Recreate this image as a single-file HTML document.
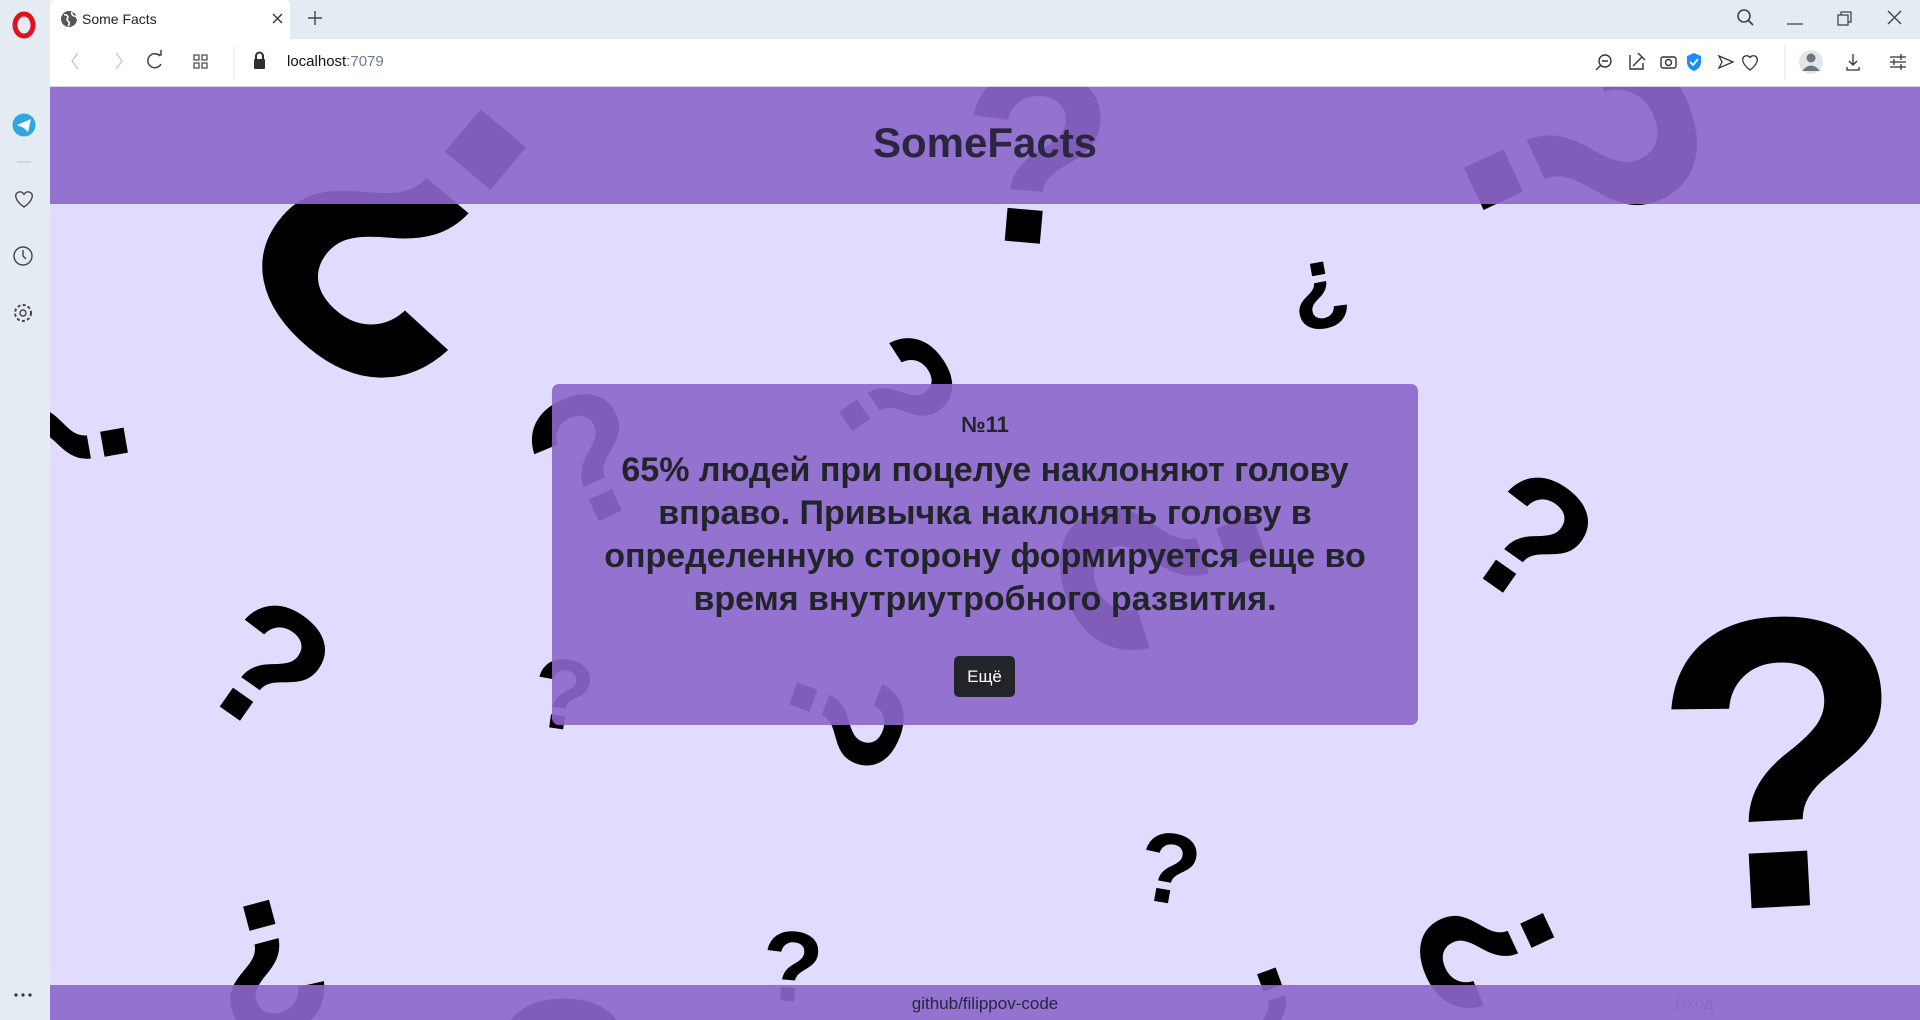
<!DOCTYPE html>
<html><head><meta charset="utf-8"><style>
*{margin:0;padding:0;box-sizing:border-box}
html,body{width:1920px;height:1020px;overflow:hidden}
body{background:#e4ebf3;font-family:"Liberation Sans","DejaVu Sans",sans-serif;position:relative}
.side{position:absolute;left:0;top:0;width:50px;height:1020px;background:#e4ebf3}
.tabbar{position:absolute;left:50px;top:0;right:0;height:39px;background:#e4ebf3}
.tab{position:absolute;left:0;top:0;width:240px;height:40px;background:#fff;border-radius:4px 4px 0 0}
.addr{position:absolute;left:50px;top:39px;right:0;height:48px;background:#fff;border-bottom:1px solid #cfd6df}
.page{position:absolute;left:50px;top:87px;width:1870px;height:933px;background:#e1dcfd;overflow:hidden}
.q{position:absolute;font-family:"Liberation Sans",sans-serif;font-weight:bold;color:#000;line-height:1;transform-origin:center;white-space:nowrap}
.ov{position:absolute;background:rgba(140,103,203,0.905)}
.hdr{left:0;top:0;right:0;height:117px}
.ftr{left:0;top:898px;right:0;height:40px}
.card{left:502px;top:297px;width:866px;height:341px;border-radius:7px}
.txt{position:absolute;color:#212529;text-align:center}
</style></head><body>
<div class="side">
 <svg width="50" height="1020" style="position:absolute;left:0;top:0">
  <ellipse cx="24" cy="25" rx="9" ry="11" fill="none" stroke="#e0121e" stroke-width="5"/>
  <circle cx="24" cy="125" r="11.5" fill="#2ea6de"/>
  <path d="M17 125 L31 119 L28 132 L24 128 Z" fill="#fff"/>
  <line x1="17" y1="162" x2="31" y2="162" stroke="#b8c2cc" stroke-width="1"/>
  <path d="M24 207 C 14 200 14 193 19 192 C 22 191 24 194 24 195 C 24 194 26 191 29 192 C 34 193 34 200 24 207 Z" fill="none" stroke="#444" stroke-width="1.4"/>
  <circle cx="23" cy="256" r="9" fill="none" stroke="#444" stroke-width="1.4"/>
  <path d="M23 250 V256 L26 259" fill="none" stroke="#444" stroke-width="1.4"/>
  <circle cx="23" cy="313" r="3" fill="none" stroke="#444" stroke-width="1.4"/>
  <circle cx="23" cy="313" r="8" fill="none" stroke="#444" stroke-width="2" stroke-dasharray="3 2.3"/>
  <circle cx="16" cy="995" r="1.6" fill="#333"/><circle cx="23" cy="995" r="1.6" fill="#333"/><circle cx="30" cy="995" r="1.6" fill="#333"/>
 </svg>
</div>
<div class="tabbar">
 <div class="tab">
  <svg width="240" height="40" style="position:absolute;left:0;top:0">
   <circle cx="19" cy="19" r="8" fill="#555"/>
   <path d="M14 15 q3 -1 4 2 q-2 3 1 5 q1 2 -1 4 M22 12 q-1 3 2 4 q3 0 3 3" stroke="#fff" stroke-width="1.6" fill="none"/>
   <path d="M223 14 L232 23 M232 14 L223 23" stroke="#333" stroke-width="1.4"/>
  </svg>
  <span style="position:absolute;left:32px;top:11px;font-size:14px;color:#222">Some Facts</span>
 </div>
 <svg width="1870" height="40" style="position:absolute;left:0;top:0">
  <path d="M258 18 H272 M265 11 V25" stroke="#444" stroke-width="1.4"/>
  <circle cx="1694" cy="16" r="6" fill="none" stroke="#444" stroke-width="1.6"/>
  <path d="M1698 20 L1703 25" stroke="#444" stroke-width="1.8"/>
  <path d="M1737 24 H1753" stroke="#444" stroke-width="1.3"/>
  <rect x="1788" y="15" width="10" height="10" fill="none" stroke="#444" stroke-width="1.3"/>
  <path d="M1791 15 V12 H1801 V22 H1798" fill="none" stroke="#444" stroke-width="1.3"/>
  <path d="M1838 11 L1851 24 M1851 11 L1838 24" stroke="#444" stroke-width="1.4"/>
 </svg>
</div>
<div class="addr">
 <svg width="1870" height="48" style="position:absolute;left:0;top:0">
  <path d="M28 14 L22 22 L28 30" fill="none" stroke="#c4c9cf" stroke-width="1.4"/>
  <path d="M66 14 L72 22 L66 30" fill="none" stroke="#c4c9cf" stroke-width="1.4"/>
  <path d="M110 17 A7 7 0 1 0 111 25" fill="none" stroke="#444" stroke-width="1.5"/>
  <path d="M106 15 L111 16 L111 11" fill="none" stroke="#444" stroke-width="1.5"/>
  <rect x="144" y="16" width="5" height="5" fill="none" stroke="#444" stroke-width="1.2"/>
  <rect x="152" y="16" width="5" height="5" fill="none" stroke="#444" stroke-width="1.2"/>
  <rect x="144" y="24" width="5" height="5" fill="none" stroke="#444" stroke-width="1.2"/>
  <rect x="152" y="24" width="5" height="5" fill="none" stroke="#444" stroke-width="1.2"/>
  <line x1="184" y1="7" x2="184" y2="41" stroke="#e5e5e5"/>
  <rect x="204" y="20" width="11" height="10" rx="1" fill="#2b3037"/>
  <path d="M206 20 V17 a3.5 3.5 0 0 1 7 0 V20" fill="none" stroke="#2b3037" stroke-width="2"/>
  <circle cx="1555" cy="22" r="6" fill="none" stroke="#333" stroke-width="1.4"/><path d="M1552 22 H1558 M1551 26 L1546 31" stroke="#333" stroke-width="1.4"/>
  <path d="M1580 16 V30 H1593 V24 M1583 27 L1592 18 M1588 14 L1595 21" fill="none" stroke="#333" stroke-width="1.4"/>
  <rect x="1611" y="18" width="15" height="11" rx="2" fill="none" stroke="#333" stroke-width="1.4"/><circle cx="1618.5" cy="23.5" r="3" fill="none" stroke="#333" stroke-width="1.4"/>
  <path d="M1637 17 L1644 14 L1651 17 V23 Q1651 29 1644 32 Q1637 29 1637 23 Z" fill="#1a8cff"/><path d="M1640 23 L1643 26 L1648 20" fill="none" stroke="#fff" stroke-width="1.8"/>
  <path d="M1669 17 L1683 23 L1669 29 L1672 23 Z" fill="none" stroke="#333" stroke-width="1.3"/>
  <path d="M1700 31 C 1692 25 1691 19 1695 17 C 1698 16 1700 18 1700 19 C 1700 18 1702 16 1705 17 C 1709 19 1708 25 1700 31 Z" fill="none" stroke="#333" stroke-width="1.3"/>
  <line x1="1735" y1="6" x2="1735" y2="41" stroke="#e5e5e5"/>
  <circle cx="1761" cy="23" r="12" fill="#e2e6ea"/><circle cx="1761" cy="19" r="4.5" fill="#6d7681"/><path d="M1752 32 Q1761 21 1770 32" fill="#6d7681"/>
  <path d="M1803 15 V26 M1799 22 L1803 26 L1807 22 M1797 28 V31 H1809 V28" fill="none" stroke="#333" stroke-width="1.3"/>
  <path d="M1840 18 H1856 M1840 23 H1856 M1840 28 H1856 M1851 15 V21 M1844 20 V26 M1851 25 V31" stroke="#333" stroke-width="1.3"/>
 </svg>
 <span style="position:absolute;left:237px;top:14px;font-size:15px;color:#111">localhost<span style="color:#6c7a8a">:7079</span></span>
</div>
<div class="page">
 <div class="q" style="left:354px;top:146px;font-size:420px;transform:translate(-50%,-50%) rotate(-140deg)">?</div>
 <div class="q" style="left:985px;top:70px;font-size:250px;transform:translate(-50%,-50%) rotate(5deg)">?</div>
 <div class="q" style="left:1530px;top:60px;font-size:330px;transform:translate(-50%,-50%) rotate(65deg)">?</div>
 <div class="q" style="left:1270px;top:207px;font-size:95px;transform:translate(-50%,-50%) rotate(170deg)">?</div>
 <div class="q" style="left:15px;top:360px;font-size:180px;transform:translate(-50%,-50%) rotate(-100deg)">?</div>
 <div class="q" style="left:844px;top:305px;font-size:165px;transform:translate(-50%,-50%) rotate(55deg)">?</div>
 <div class="q" style="left:538px;top:372px;font-size:180px;transform:translate(-50%,-50%) rotate(-25deg)">?</div>
 <div class="q" style="left:1480px;top:452px;font-size:175px;transform:translate(-50%,-50%) rotate(35deg)">?</div>
 <div class="q" style="left:217px;top:580px;font-size:175px;transform:translate(-50%,-50%) rotate(35deg)">?</div>
 <div class="q" style="left:513px;top:608px;font-size:100px;transform:translate(-50%,-50%) rotate(8deg)">?</div>
 <div class="q" style="left:795px;top:629px;font-size:165px;transform:translate(-50%,-50%) rotate(110deg)">?</div>
 <div class="q" style="left:1113px;top:476px;font-size:290px;transform:translate(-50%,-50%) rotate(-110deg)">?</div>
 <div class="q" style="left:1732px;top:676px;font-size:415px;transform:translate(-50%,-50%) rotate(-3deg)">?</div>
 <div class="q" style="left:1119px;top:782px;font-size:100px;transform:translate(-50%,-50%) rotate(10deg)">?</div>
 <div class="q" style="left:1438px;top:862px;font-size:190px;transform:translate(-50%,-50%) rotate(-115deg)">?</div>
 <div class="q" style="left:219px;top:880px;font-size:190px;transform:translate(-50%,-50%) rotate(165deg)">?</div>
 <div class="q" style="left:742px;top:880px;font-size:100px;transform:translate(-50%,-50%) rotate(5deg)">?</div>
 <div class="q" style="left:1230px;top:930px;font-size:140px;transform:translate(-50%,-50%) rotate(160deg)">?</div>
 <div class="q" style="left:513px;top:1000px;font-size:250px;transform:translate(-50%,-50%) rotate(0deg)">?</div>

 <div class="ov hdr"></div>
 <div class="txt" style="left:0;right:0;top:32px;font-size:42px;font-weight:bold;color:#2a2540">SomeFacts</div>
 <div class="ov card"></div>
 <div class="txt" style="left:502px;width:866px;top:325px;font-size:22px;font-weight:bold">№11</div>
 <div class="txt" style="left:502px;width:866px;top:362px;font-size:34px;font-weight:bold;line-height:43px">65% людей при поцелуе наклоняют голову<br>вправо. Привычка наклонять голову в<br>определенную сторону формируется еще во<br>время внутриутробного развития.</div>
 <div style="position:absolute;left:904px;top:569px;width:61px;height:41px;background:#212529;border-radius:5px;color:#fff;font-size:17px;text-align:center;line-height:41px">Ещё</div>
 <div class="ov ftr"></div>
 <div class="txt" style="left:0;right:0;top:907px;font-size:17px;color:#2a2540">github/filippov-code</div>
 <div class="txt" style="left:1625px;top:907px;font-size:17px;color:#8a6ac8">Вход</div>
</div>
</body></html>
